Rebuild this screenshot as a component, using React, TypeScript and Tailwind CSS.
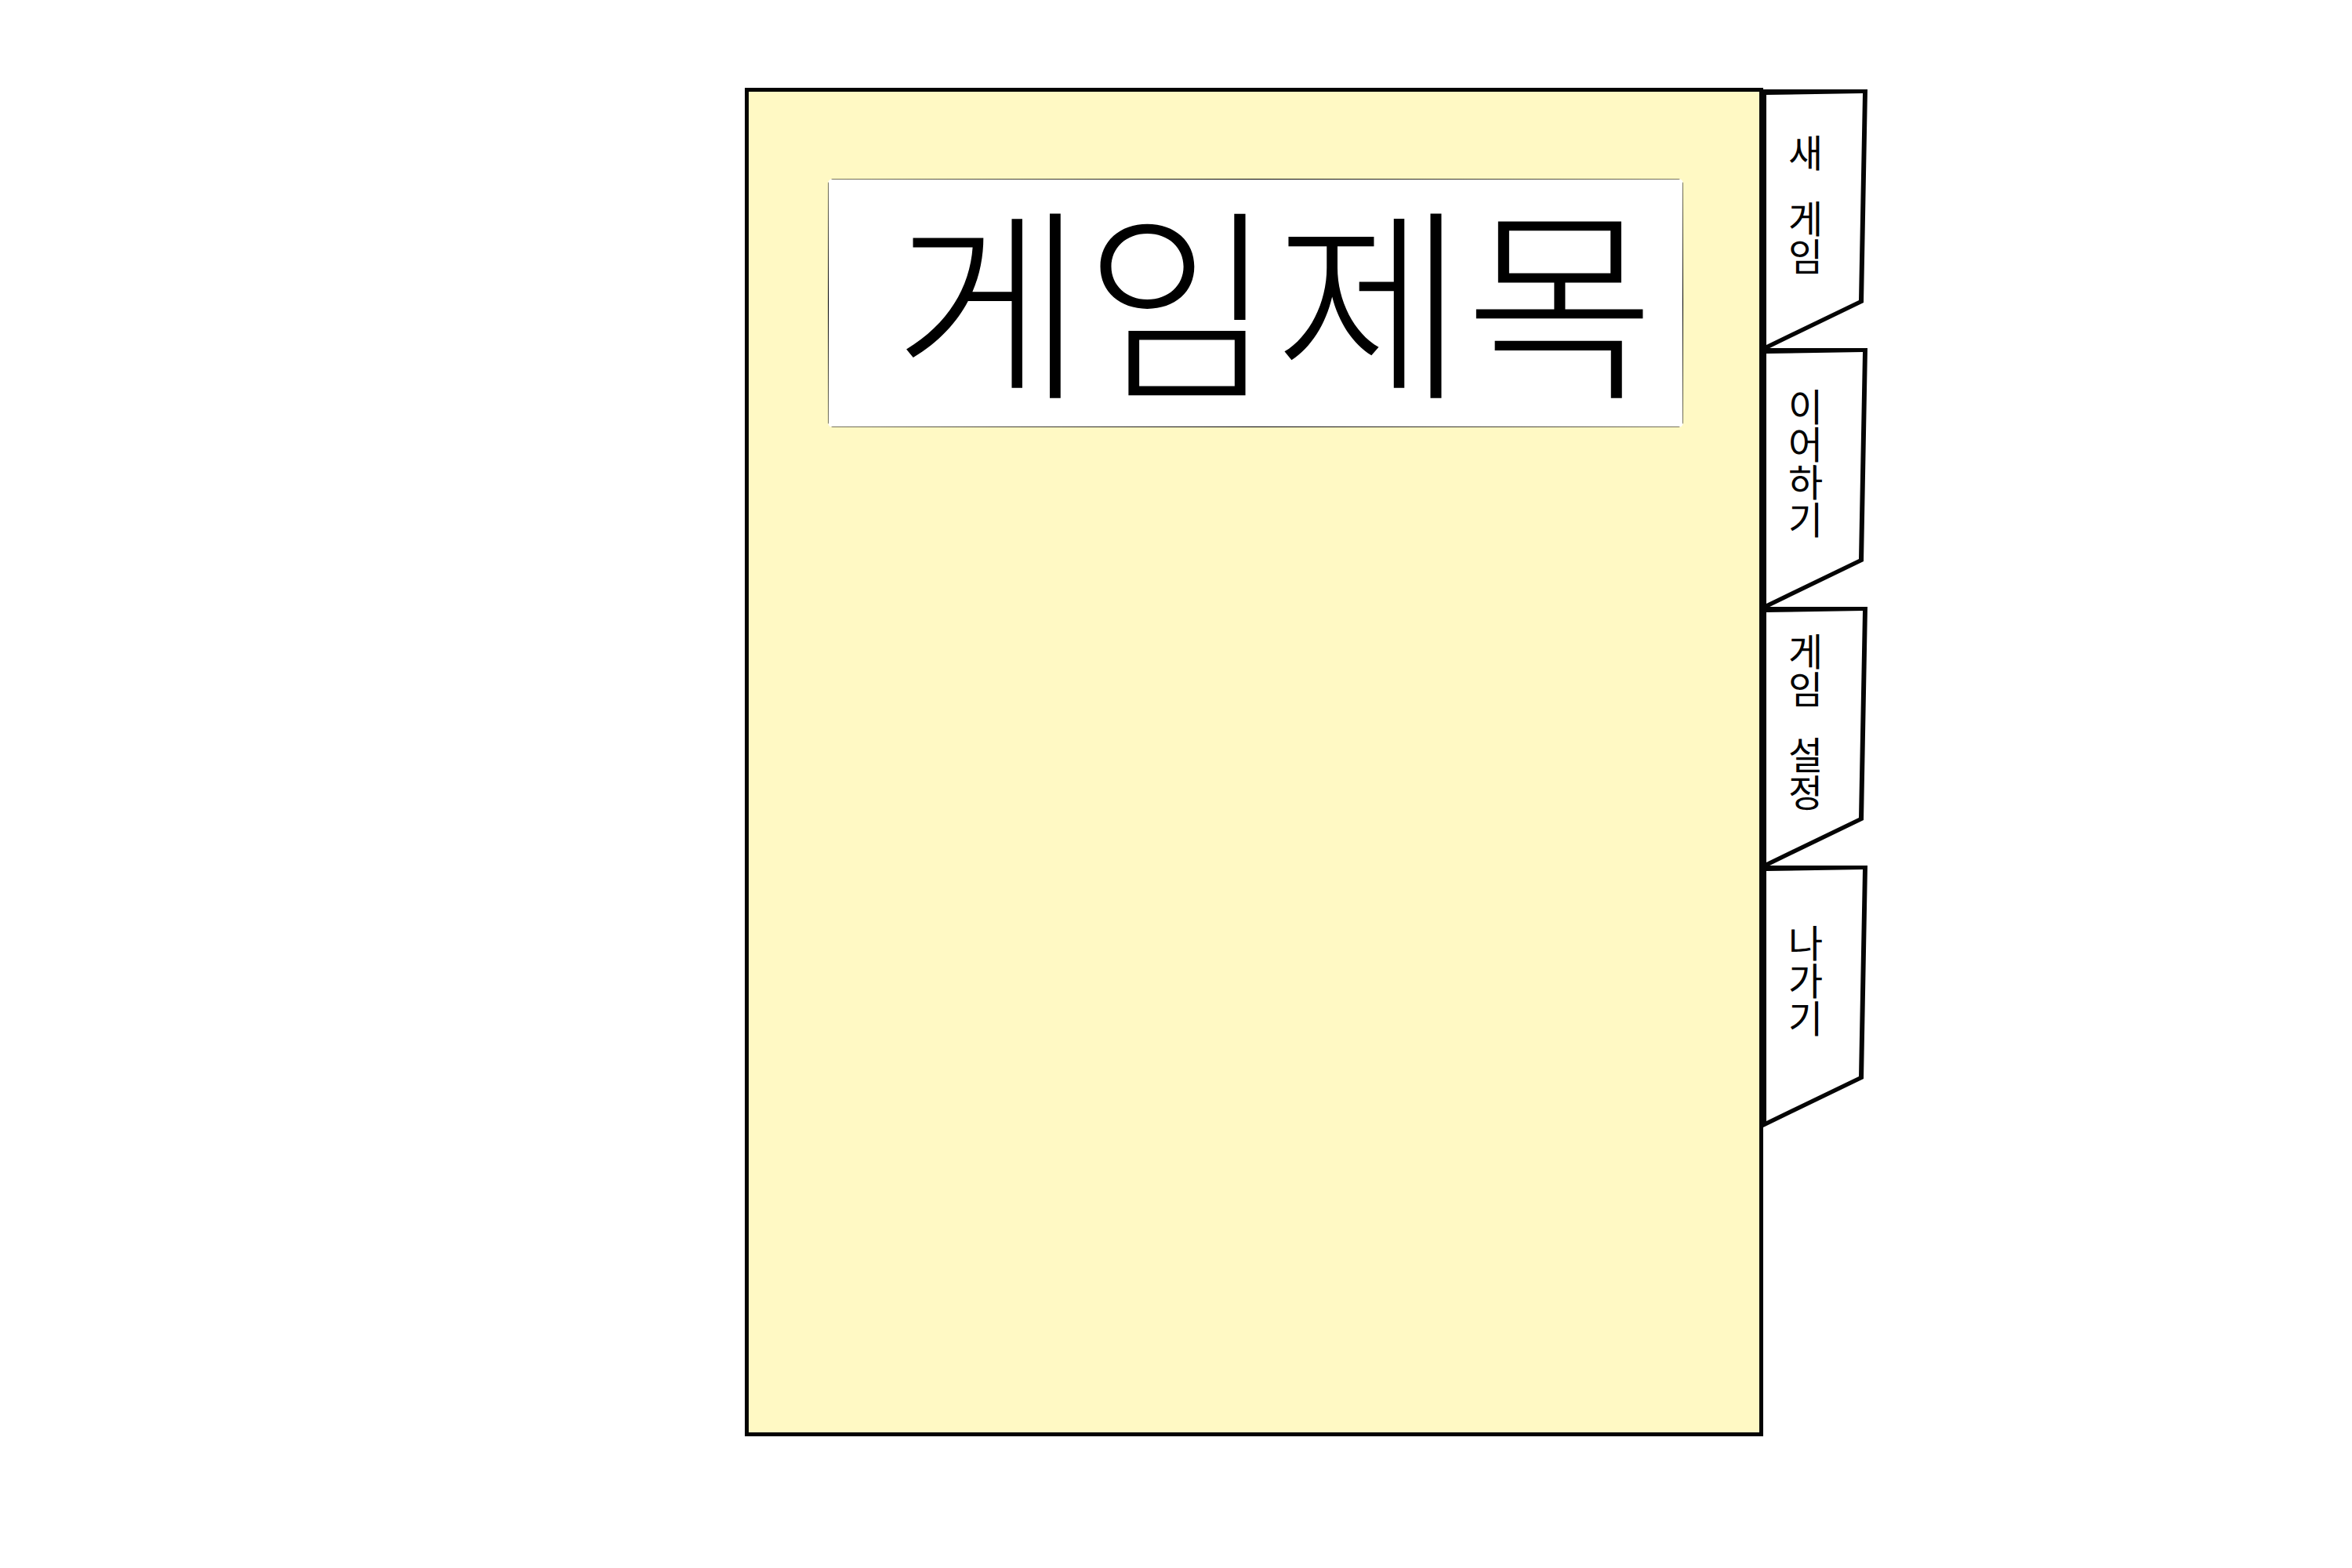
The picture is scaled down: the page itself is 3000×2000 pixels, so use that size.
type Tab = { id: string; words: string[] };

const tabs: Tab[] = [
  { id: 'new', words: ['새', '게임'] },
  { id: 'continue', words: ['이어하기'] },
  { id: 'settings', words: ['게임', '설정'] },
  { id: 'exit', words: ['나가기'] },
];

function TabButton({ words }: { words: string[] }) {
  return (
    <button
      type="button"
      aria-label={words.join(' ')}
      className="relative -mb-1 flex h-[334px] w-[138px] cursor-pointer items-center justify-center pr-5 pb-10"
    >
      <svg aria-hidden="true" viewBox="0 0 138 334" className="absolute inset-0 h-full w-full">
        <path d="M5 4 L134 3 L130 270 L5 331 Z" fill="#fff" />
        <path
          fillRule="evenodd"
          fill="#050505"
          d="M0 0 H138 L133 272 L5 334 H0 Z M9 7 V326 L127 269 L132 5 Z"
        />
      </svg>
      <span className="relative flex items-center gap-9 font-['Noto_Sans_CJK_KR',sans-serif] text-[48px] leading-[48px] font-normal text-black [writing-mode:vertical-rl]">
        {words.map((word) => (
          <span key={word}>{word}</span>
        ))}
      </span>
    </button>
  );
}

export default function App() {
  return (
    <main className="grid min-h-screen grid-cols-[950fr_1299fr_751fr] items-start bg-white pt-28 pb-42">
      <section className="col-start-2 min-h-[1720px] border-5 border-[#030303] bg-[#fff9c4] pt-[111px] pr-[97px] pl-[101px]">
        <div className="rounded-md bg-white bg-[linear-gradient(90deg,#fff_4px,#77745c_5px,#000_50%,#77745c_calc(100%-5px),#fff_calc(100%-4px)),linear-gradient(90deg,#fff_4px,#77745c_5px,#000_50%,#77745c_calc(100%-5px),#fff_calc(100%-4px)),linear-gradient(#fff_4px,#77745c_5px,#000_50%,#77745c_calc(100%-5px),#fff_calc(100%-4px)),linear-gradient(#fff_4px,#77745c_5px,#000_50%,#77745c_calc(100%-5px),#fff_calc(100%-4px))] bg-[length:100%_1px,100%_1px,1px_100%,1px_100%] bg-[position:top,bottom,left,right] bg-no-repeat">
          <h1 className="flex h-[317px] items-center justify-center pb-6 pl-12 font-['Noto_Sans_CJK_KR',sans-serif] text-[264px] leading-[293px] font-light whitespace-nowrap text-black">
            게임제목
          </h1>
        </div>
      </section>
      <nav aria-label="게임 메뉴" className="relative -ml-[5px] flex flex-col items-start pt-0.5">
        {tabs.map((tab) => (
          <TabButton key={tab.id} words={tab.words} />
        ))}
      </nav>
    </main>
  );
}
